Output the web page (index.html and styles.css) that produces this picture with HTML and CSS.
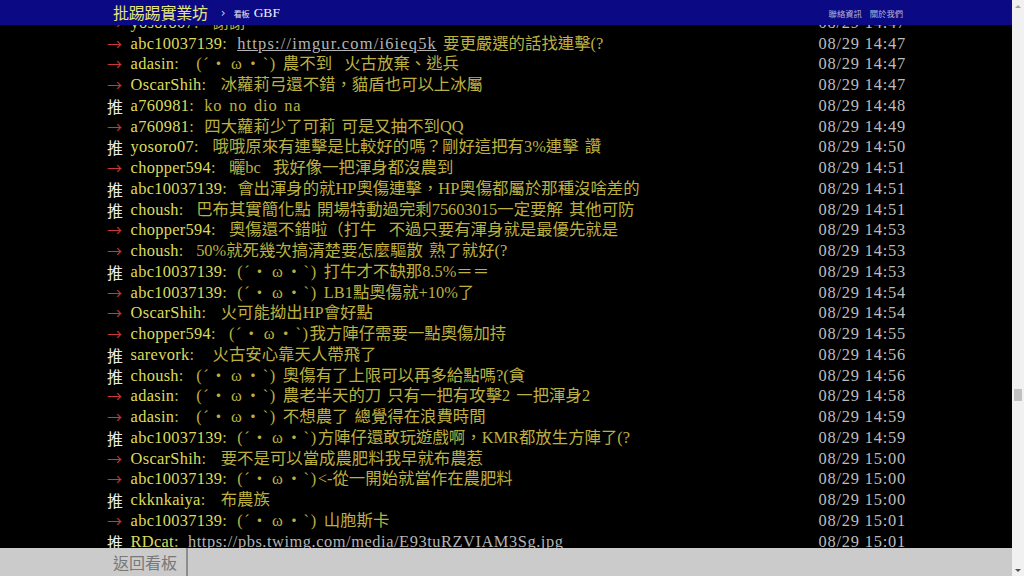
FILE: index.html
```html
<!DOCTYPE html>
<html lang="zh-Hant">
<head>
<meta charset="utf-8">
<title>看板 GBF - 批踢踢實業坊</title>
<link rel="stylesheet" href="styles.css">
</head>
<body>
<div class="viewport">
  <div class="page">
    <header class="topbar">
      <div class="bar-inner">
        <a class="logo">批踢踢實業坊</a>
        <span class="crumb-sep">›</span>
        <span class="board-label">看板</span>
        <a class="board-name">GBF</a>
        <nav class="right-links"><a>聯絡資訊</a><a>關於我們</a></nav>
      </div>
    </header>
    <main class="content">
      <div class="pushes">
        <div class="push"><span class="tag arrow-tag">→</span><span class="who c10"><span class="uid">yosoro07</span>:</span><span class="ctext">謝謝</span><span class="time">08/29 14:47</span></div>
        <div class="push"><span class="tag arrow-tag">→</span><span class="who c13"><span class="uid">abc10037139</span>:</span><span class="ctext"><a class="link imgur">https://imgur.com/i6ieq5k</a> 要更嚴選的話找連擊(?</span><span class="time">08/29 14:47</span></div>
        <div class="push"><span class="tag arrow-tag">→</span><span class="who c8"><span class="uid">adasin</span>:</span><span class="ctext"><span class="kaomoji">(´・<span class="w">ω</span>・`)</span> 農不到&nbsp; 火古放棄、逃兵</span><span class="time">08/29 14:47</span></div>
        <div class="push"><span class="tag arrow-tag">→</span><span class="who c11"><span class="uid">OscarShih</span>:</span><span class="ctext">冰蘿莉弓還不錯，貓盾也可以上冰屬</span><span class="time">08/29 14:47</span></div>
        <div class="push"><span class="tag good">推</span><span class="who c9"><span class="uid">a760981</span>:</span><span class="ctext"><span class="lat">ko no dio na</span></span><span class="time">08/29 14:48</span></div>
        <div class="push"><span class="tag arrow-tag">→</span><span class="who c9"><span class="uid">a760981</span>:</span><span class="ctext">四大蘿莉少了可莉 可是又抽不到QQ</span><span class="time">08/29 14:49</span></div>
        <div class="push"><span class="tag good">推</span><span class="who c10"><span class="uid">yosoro07</span>:</span><span class="ctext">哦哦原來有連擊是比較好的嗎？剛好這把有3%連擊 讚</span><span class="time">08/29 14:50</span></div>
        <div class="push"><span class="tag arrow-tag">→</span><span class="who c12"><span class="uid">chopper594</span>:</span><span class="ctext">曬bc&nbsp; 我好像一把渾身都沒農到</span><span class="time">08/29 14:51</span></div>
        <div class="push"><span class="tag good">推</span><span class="who c13"><span class="uid">abc10037139</span>:</span><span class="ctext">會出渾身的就HP奧傷連擊，HP奧傷都屬於那種沒啥差的</span><span class="time">08/29 14:51</span></div>
        <div class="push"><span class="tag good">推</span><span class="who c8"><span class="uid">choush</span>:</span><span class="ctext">巴布其實簡化點 開場特動過完剩75603015一定要解 其他可防</span><span class="time">08/29 14:51</span></div>
        <div class="push"><span class="tag arrow-tag">→</span><span class="who c12"><span class="uid">chopper594</span>:</span><span class="ctext">奧傷還不錯啦（打牛&nbsp; 不過只要有渾身就是最優先就是</span><span class="time">08/29 14:53</span></div>
        <div class="push"><span class="tag arrow-tag">→</span><span class="who c8"><span class="uid">choush</span>:</span><span class="ctext">50%就死幾次搞清楚要怎麼驅散 熟了就好(?</span><span class="time">08/29 14:53</span></div>
        <div class="push"><span class="tag good">推</span><span class="who c13"><span class="uid">abc10037139</span>:</span><span class="ctext"><span class="kaomoji">(´・<span class="w">ω</span>・`)</span> 打牛才不缺那8.5%＝＝</span><span class="time">08/29 14:53</span></div>
        <div class="push"><span class="tag arrow-tag">→</span><span class="who c13"><span class="uid">abc10037139</span>:</span><span class="ctext"><span class="kaomoji">(´・<span class="w">ω</span>・`)</span> LB1點奧傷就+10%了</span><span class="time">08/29 14:54</span></div>
        <div class="push"><span class="tag arrow-tag">→</span><span class="who c11"><span class="uid">OscarShih</span>:</span><span class="ctext">火可能拗出HP會好點</span><span class="time">08/29 14:54</span></div>
        <div class="push"><span class="tag arrow-tag">→</span><span class="who c12"><span class="uid">chopper594</span>:</span><span class="ctext"><span class="kaomoji">(´・<span class="w">ω</span>・`)</span>我方陣仔需要一點奧傷加持</span><span class="time">08/29 14:55</span></div>
        <div class="push"><span class="tag good">推</span><span class="who c10"><span class="uid">sarevork</span>:</span><span class="ctext">火古安心靠天人帶飛了</span><span class="time">08/29 14:56</span></div>
        <div class="push"><span class="tag good">推</span><span class="who c8"><span class="uid">choush</span>:</span><span class="ctext"><span class="kaomoji">(´・<span class="w">ω</span>・`)</span> 奧傷有了上限可以再多給點嗎?(貪</span><span class="time">08/29 14:56</span></div>
        <div class="push"><span class="tag arrow-tag">→</span><span class="who c8"><span class="uid">adasin</span>:</span><span class="ctext"><span class="kaomoji">(´・<span class="w">ω</span>・`)</span> 農老半天的刀 只有一把有攻擊2 一把渾身2</span><span class="time">08/29 14:58</span></div>
        <div class="push"><span class="tag arrow-tag">→</span><span class="who c8"><span class="uid">adasin</span>:</span><span class="ctext"><span class="kaomoji">(´・<span class="w">ω</span>・`)</span> 不想農了 總覺得在浪費時間</span><span class="time">08/29 14:59</span></div>
        <div class="push"><span class="tag good">推</span><span class="who c13"><span class="uid">abc10037139</span>:</span><span class="ctext"><span class="kaomoji">(´・<span class="w">ω</span>・`)</span>方陣仔還敢玩遊戲啊，KMR都放生方陣了(?</span><span class="time">08/29 14:59</span></div>
        <div class="push"><span class="tag arrow-tag">→</span><span class="who c11"><span class="uid">OscarShih</span>:</span><span class="ctext">要不是可以當成農肥料我早就布農惹</span><span class="time">08/29 15:00</span></div>
        <div class="push"><span class="tag arrow-tag">→</span><span class="who c13"><span class="uid">abc10037139</span>:</span><span class="ctext"><span class="kaomoji">(´・<span class="w">ω</span>・`)</span>&lt;-從一開始就當作在農肥料</span><span class="time">08/29 15:00</span></div>
        <div class="push"><span class="tag good">推</span><span class="who c11"><span class="uid">ckknkaiya</span>:</span><span class="ctext">布農族</span><span class="time">08/29 15:00</span></div>
        <div class="push"><span class="tag arrow-tag">→</span><span class="who c13"><span class="uid">abc10037139</span>:</span><span class="ctext"><span class="kaomoji">(´・<span class="w">ω</span>・`)</span> 山胞斯卡</span><span class="time">08/29 15:01</span></div>
        <div class="push"><span class="tag good">推</span><span class="who c7"><span class="uid">RDcat</span>:</span><span class="ctext"><a class="link twimg">https://pbs.twimg.com/media/E93tuRZVIAM3Sg.jpg</a></span><span class="time">08/29 15:01</span></div>
      </div>
    </main>
    <footer class="bottombar">
      <div class="bar-inner">
        <a class="back-btn">返回看板</a>
      </div>
    </footer>
  </div>
  <div class="scrollbar">
    <span class="sb-btn"><span class="tri-up"></span></span>
    <div class="sb-track"><div class="sb-thumb"></div></div>
    <span class="sb-btn"><span class="tri-down"></span></span>
  </div>
</div>
</body>
</html>
```
FILE: styles.css
```css
html, body {
  margin: 0;
  padding: 0;
  width: 1024px;
  height: 576px;
  overflow: hidden;
  background: #000;
}

.viewport {
  display: flex;
  width: 1024px;
  height: 576px;
}

.page {
  width: 1012px;
  height: 576px;
  display: flex;
  flex-direction: column;
  background: #000;
}

.bar-inner {
  width: 800px;
  margin: 0 auto;
  display: flex;
  align-items: center;
  height: 100%;
}

/* top bar */
.topbar {
  height: 25px;
  flex: none;
  background: #0b0a84;
  font-family: "Liberation Serif", "Noto Sans CJK TC", serif;
}

.logo {
  margin-left: 7px;
  font-family: "Noto Sans CJK TC", sans-serif;
  font-size: 16px;
  line-height: 25px;
  color: #e6e67a;
  letter-spacing: -0.2px;
}

.crumb-sep {
  margin-left: 13px;
  font-size: 12px;
  color: #c8c8e0;
  font-family: "DejaVu Sans", sans-serif;
}

.board-label {
  margin-left: 8px;
  font-family: "Noto Sans CJK TC", sans-serif;
  font-size: 8px;
  color: #e8e8f0;
  position: relative;
  top: 1px;
}

.board-name {
  margin-left: 4px;
  font-size: 13.5px;
  color: #f0f0f8;
}

.right-links {
  margin-left: auto;
  margin-right: 3px;
  display: flex;
  gap: 8px;
  font-family: "Noto Sans CJK TC", sans-serif;
  font-size: 8.3px;
  color: #b4b4d8;
}

/* content */
.content {
  flex: 1;
  overflow: hidden;
}

.pushes {
  width: 800px;
  margin: -12.125px auto 0;
  font-family: "Liberation Serif", "Noto Sans CJK TC", serif;
  font-size: 16.4px;
}

.push {
  display: flex;
  height: 20.75px;
  line-height: 20.75px;
  white-space: nowrap;
  overflow: hidden;
}

.tag {
  flex: none;
  width: 24.6px;
  padding-left: 1px;
  box-sizing: border-box;
  font-family: "Noto Sans CJK TC", sans-serif;
  font-size: 16px;
}

.good {
  color: #ececec;
}

.arrow-tag {
  color: #c83838;
  font-size: 15px;
}

/* "userid: " takes one half-width cell per character, like the terminal font */
.who {
  flex: none;
  color: #c0b440;
}

.c7 { width: 7ch; }
.c8 { width: 8ch; }
.c9 { width: 9ch; }
.c10 { width: 10ch; }
.c11 { width: 11ch; }
.c12 { width: 12ch; }
.c13 { width: 13ch; }

.uid {
  color: #dcdc5c;
  letter-spacing: 0.3px;
}

.ctext {
  color: #bcb040;
  flex: 1;
  overflow: hidden;
  word-spacing: 2px;
}

.lat {
  letter-spacing: 0.8px;
}

.kaomoji {
  letter-spacing: 1.6px;
}

.kaomoji .w {
  display: inline-block;
  width: 16.4px;
  text-align: center;
  letter-spacing: 0;
}

.link {
  color: #b4b4b4;
  text-decoration: underline;
}

.link.imgur {
  letter-spacing: 1.2px;
}

.link.twimg {
  letter-spacing: 0.55px;
}

.time {
  flex: none;
  margin-left: auto;
  color: #bdbdbd;
  letter-spacing: 0.8px;
}

/* bottom bar */
.bottombar {
  height: 28px;
  flex: none;
  background: #cbcbcb;
}

.back-btn {
  align-self: stretch;
  display: flex;
  align-items: center;
  padding: 0 9px 0 7px;
  border-right: 2px solid #8c8c8c;
  font-family: "Noto Sans CJK TC", sans-serif;
  font-size: 16px;
  color: #787878;
}

/* fake scrollbar */
.scrollbar {
  width: 12px;
  height: 576px;
  background: #f1f1f1;
  display: flex;
  flex-direction: column;
}

.sb-btn {
  height: 12px;
  flex: none;
  display: flex;
  align-items: center;
  justify-content: center;
}

.tri-up {
  width: 0;
  height: 0;
  border-left: 3px solid transparent;
  border-right: 3px solid transparent;
  border-bottom: 3px solid #a3a3a3;
}

.tri-down {
  width: 0;
  height: 0;
  border-left: 3px solid transparent;
  border-right: 3px solid transparent;
  border-top: 3px solid #505050;
}

.sb-track {
  flex: 1;
  padding: 0 2px;
}

.sb-thumb {
  margin-top: 377px;
  height: 12px;
  background: #c1c1c1;
}
```
